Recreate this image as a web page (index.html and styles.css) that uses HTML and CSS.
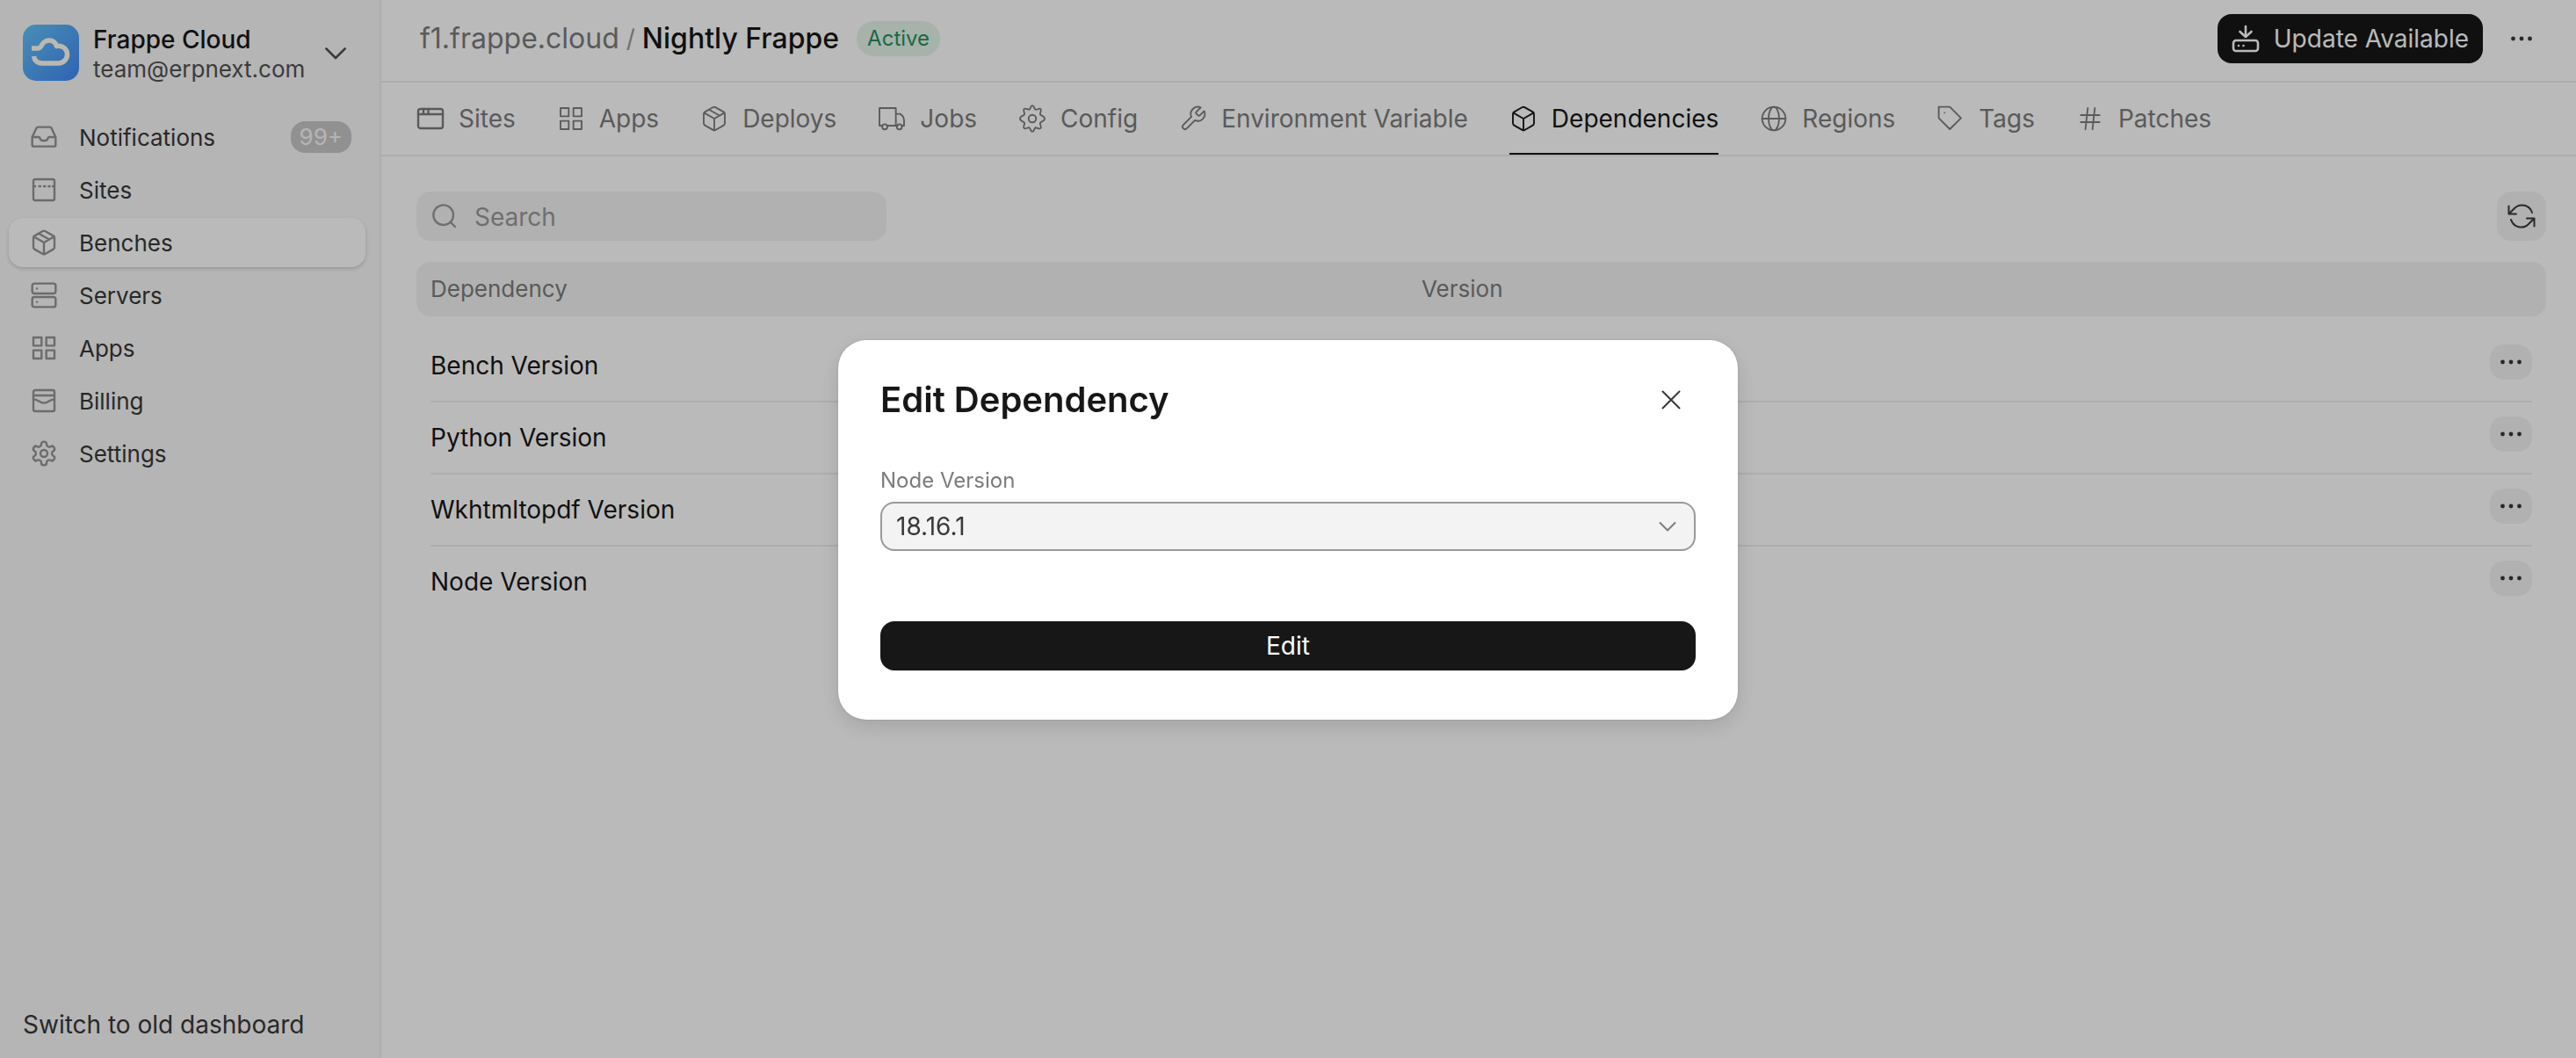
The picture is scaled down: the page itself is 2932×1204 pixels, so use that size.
FILE: index.html
```html
<!DOCTYPE html>
<html lang="en">
<head>
<meta charset="utf-8">
<meta name="viewport" content="width=device-width, initial-scale=1">
<title>Nightly Frappe - Frappe Cloud</title>
<link rel="stylesheet" href="styles.css">
</head>
<body>
<svg class="sprite" aria-hidden="true">
  <symbol id="i-package" viewBox="0 0 24 24"><path d="m7.5 4.3 9 5.1M21 8a2 2 0 0 0-1-1.7l-7-4a2 2 0 0 0-2 0l-7 4A2 2 0 0 0 3 8v8a2 2 0 0 0 1 1.7l7 4a2 2 0 0 0 2 0l7-4a2 2 0 0 0 1-1.700zM3.300 7 12 12l8.700-5M12 22V12"/></symbol>
  <symbol id="i-grid" viewBox="0 0 24 24"><path d="M3 3h7v7H3zM14 3h7v7h-7zM14 14h7v7h-7zM3 14h7v7H3z"/></symbol>
  <symbol id="i-dots" viewBox="0 0 32 32"><g fill="currentColor" stroke="none"><circle cx="6.500" cy="16" r="2.400"/><circle cx="16" cy="16" r="2.400"/><circle cx="25.500" cy="16" r="2.400"/></g></symbol>
</svg>

<div class="app">
  <aside class="sidebar">
    <button class="team" type="button">
      <svg class="logo" viewBox="0 0 64 64" aria-hidden="true">
        <defs><linearGradient id="sky" x1="0" y1="0" x2="1" y2="1"><stop offset="0" stop-color="#65c3f8"/><stop offset="1" stop-color="#3f8af6"/></linearGradient></defs>
        <rect width="64" height="64" rx="15" fill="url(#sky)"/>
        <path d="M10 27h7c3 0 3.500-2 5-4.500C24 19.500 26.500 18 30 18c4 0 7 2.200 8.500 6.500C45 23 50.500 28 50.500 34c0 5.500-4.500 10-10 10H22c-5.500 0-9-3.500-9.300-8" fill="none" stroke="#fffdf2" stroke-width="5.500" stroke-linejoin="round"/>
      </svg>
      <span class="team-text"><span class="team-name">Frappe Cloud</span><span class="team-mail">team@erpnext.com</span></span>
      <svg class="icon" viewBox="0 0 24 24" aria-hidden="true"><path d="m4 8.500 8 8 8-8"/></svg>
    </button>
    <nav class="nav">
      <a href="#" class="nav-item"><svg class="icon" viewBox="0 0 24 24"><path d="M22 12h-5.500q-.8 0-1.200 1.200Q14.700 15 13 15h-2q-1.700 0-2.300-1.800Q8.300 12 7.500 12H2M5.500 4.500 2 12v6.500a1.500 1.500 0 0 0 1.500 1.500h17a1.500 1.500 0 0 0 1.500-1.500V12l-3.500-7.500A1.500 1.500 0 0 0 17 3.500H7a1.500 1.500 0 0 0-1.500 1z"/></svg><span class="nav-label">Notifications</span><span class="count">99+</span></a>
      <a href="#" class="nav-item"><svg class="icon" viewBox="0 0 24 24"><rect x="3" y="3" width="18" height="18" rx="1.500"/><path d="M3 9h1.500M8 9h1M12 9h1M16 9h1M19.500 9H21"/></svg><span class="nav-label">Sites</span></a>
      <a href="#" class="nav-item active"><svg class="icon"><use href="#i-package"/></svg><span class="nav-label">Benches</span></a>
      <a href="#" class="nav-item"><svg class="icon" viewBox="0 0 24 24"><rect x="2" y="2" width="20" height="8.500" rx="1.800"/><rect x="2" y="13.500" width="20" height="8.500" rx="1.800"/><path d="M6 6.300h.01M6 17.700h.01"/></svg><span class="nav-label">Servers</span></a>
      <a href="#" class="nav-item"><svg class="icon"><use href="#i-grid"/></svg><span class="nav-label">Apps</span></a>
      <a href="#" class="nav-item"><svg class="icon" viewBox="0 0 24 24"><rect x="3" y="3" width="18" height="18" rx="1.500"/><path d="M3 7.500h18M3 11c4-.5 5 3 9 3s5-3.500 9-3"/></svg><span class="nav-label">Billing</span></a>
      <a href="#" class="nav-item"><svg class="icon" viewBox="0 0 24 24"><path d="M12.220 2h-.44a2 2 0 0 0-2 2v.18a2 2 0 0 1-1 1.730l-.43.25a2 2 0 0 1-2 0l-.15-.08a2 2 0 0 0-2.730.73l-.22.38a2 2 0 0 0 .73 2.730l.15.1a2 2 0 0 1 1 1.720v.51a2 2 0 0 1-1 1.740l-.15.09a2 2 0 0 0-.73 2.730l.22.38a2 2 0 0 0 2.730.73l.15-.08a2 2 0 0 1 2 0l.43.25a2 2 0 0 1 1 1.730V20a2 2 0 0 0 2 2h.44a2 2 0 0 0 2-2v-.18a2 2 0 0 1 1-1.730l.43-.25a2 2 0 0 1 2 0l.15.08a2 2 0 0 0 2.730-.73l.22-.39a2 2 0 0 0-.73-2.730l-.15-.08a2 2 0 0 1-1-1.740v-.5a2 2 0 0 1 1-1.740l.15-.09a2 2 0 0 0 .73-2.730l-.22-.38a2 2 0 0 0-2.730-.73l-.15.08a2 2 0 0 1-2 0l-.43-.25a2 2 0 0 1-1-1.730V4a2 2 0 0 0-2-2z"/><circle cx="12" cy="12" r="3"/></svg><span class="nav-label">Settings</span></a>
    </nav>
    <a href="#" class="old-link">Switch to old dashboard</a>
  </aside>

  <main class="main">
    <header class="topbar">
      <div class="crumbs"><a href="#" class="crumb">f1.frappe.cloud</a><span class="slash">/</span><h1 class="crumb-current">Nightly Frappe</h1><span class="status">Active</span></div>
      <div class="actions">
        <button class="btn-solid" type="button"><svg class="icon bold" viewBox="0 0 32 32"><path d="M16 2v12M9.500 8l6.500 6 6.500-6"/><rect x="2" y="18" width="28" height="12" rx="3"/><path d="M8 24h.01M13.500 24h.01"/></svg>Update Available</button>
        <button class="btn-icon" type="button" aria-label="More"><svg class="icon"><use href="#i-dots"/></svg></button>
      </div>
    </header>

    <nav class="tabs">
      <a href="#" class="tab"><svg class="icon bold" viewBox="0 0 32 32"><rect x="2" y="5" width="28" height="22" rx="2.500"/><path d="M2 11h28M8 5v6M13.500 5v6"/></svg>Sites</a>
      <a href="#" class="tab"><svg class="icon"><use href="#i-grid"/></svg>Apps</a>
      <a href="#" class="tab"><svg class="icon"><use href="#i-package"/></svg>Deploys</a>
      <a href="#" class="tab"><svg class="icon" viewBox="0 0 24 24"><path d="M4 18H1.500V3h14v15H8M15.500 8H19q3.500 2 3.500 5.500V18H21M15.500 18H17"/><circle cx="6" cy="19" r="2.200"/><circle cx="18.500" cy="19" r="2.200"/></svg>Jobs</a>
      <a href="#" class="tab"><svg class="icon" viewBox="0 0 24 24"><path d="M12 .8c1.700 0 1.500 3 2.600 3.500s3.300-1.700 4.500-.5-.9 3.300-.4 4.500 3.800 1.400 3.800 3.700-3.300 2.500-3.800 3.700 1.600 3.300.4 4.500-3.400-.9-4.500-.5-.9 3.500-2.600 3.500-1.500-3-2.600-3.500-3.300 1.700-4.500.5.9-3.300.4-4.500S1.500 14.300 1.500 12s3.300-2.500 3.800-3.700-1.600-3.300-.4-4.500 3.400.9 4.500.5S10.300.8 12 .8z"/><circle cx="12" cy="12" r="3.200"/></svg>Config</a>
      <a href="#" class="tab"><svg class="icon" viewBox="0 0 24 24"><path d="M14.700 6.300a1 1 0 0 0 0 1.400l1.600 1.600a1 1 0 0 0 1.400 0l3.770-3.770a6 6 0 0 1-7.940 7.940l-6.910 6.910a2.120 2.120 0 0 1-3-3l6.910-6.910a6 6 0 0 1 7.940-7.940z"/></svg>Environment Variable</a>
      <a href="#" class="tab selected" aria-current="page"><svg class="icon" viewBox="0 0 24 24"><path d="M21 8a2 2 0 0 0-1-1.700l-7-4a2 2 0 0 0-2 0l-7 4A2 2 0 0 0 3 8v8a2 2 0 0 0 1 1.700l7 4a2 2 0 0 0 2 0l7-4a2 2 0 0 0 1-1.700zM3.300 7 12 12l8.700-5M12 22V12"/></svg>Dependencies</a>
      <a href="#" class="tab"><svg class="icon" viewBox="0 0 24 24"><circle cx="12" cy="12" r="10"/><ellipse cx="12" cy="12" rx="4.500" ry="10"/><path d="M2 12h20"/></svg>Regions</a>
      <a href="#" class="tab"><svg class="icon" viewBox="0 0 24 24"><path d="M2 2h9.500l9.500 9.500-9.500 9.500L2 11.500zM7 7h.01"/></svg>Tags</a>
      <a href="#" class="tab"><svg class="icon" viewBox="0 0 24 24"><path d="M4 9h16M4 15h16M10 3 8 21M16 3l-2 18"/></svg>Patches</a>
    </nav>

    <section class="content">
      <div class="tools">
        <label class="search"><svg class="icon" viewBox="0 0 24 24"><circle cx="11" cy="11" r="8.500"/><path d="m21 21-4-4"/></svg><input type="text" placeholder="Search" aria-label="Search"></label>
        <button class="btn-refresh" type="button" aria-label="Refresh"><svg class="icon thin" viewBox="0 0 32 32"><path d="M1.500 4.500v9H10M30.500 27.500v-9H22M1.500 13.500 8 7a12 12 0 0 1 20 5M30.500 18.500 24 25a12 12 0 0 1-20-5"/></svg></button>
      </div>
      <table class="deps">
        <thead><tr><th class="edge"></th><th class="name">Dependency</th><th>Version</th><th class="act"></th><th class="edge"></th></tr></thead>
        <tbody>
          <tr class="gap"><td colspan="5"></td></tr>
          <tr><td class="edge"></td><td>Bench Version</td><td></td><td class="act"><button class="btn-row" type="button" aria-label="Options"><svg class="icon"><use href="#i-dots"/></svg></button></td><td class="edge"></td></tr>
          <tr><td class="edge"></td><td>Python Version</td><td></td><td class="act"><button class="btn-row" type="button" aria-label="Options"><svg class="icon"><use href="#i-dots"/></svg></button></td><td class="edge"></td></tr>
          <tr><td class="edge"></td><td>Wkhtmltopdf Version</td><td></td><td class="act"><button class="btn-row" type="button" aria-label="Options"><svg class="icon"><use href="#i-dots"/></svg></button></td><td class="edge"></td></tr>
          <tr><td class="edge"></td><td>Node Version</td><td></td><td class="act"><button class="btn-row" type="button" aria-label="Options"><svg class="icon"><use href="#i-dots"/></svg></button></td><td class="edge"></td></tr>
        </tbody>
      </table>
    </section>
  </main>
</div>

<div class="overlay">
  <div class="dialog" role="dialog" aria-modal="true" aria-labelledby="dialog-title">
    <div class="dialog-head">
      <h2 id="dialog-title">Edit Dependency</h2>
      <button class="btn-icon" type="button" aria-label="Close"><svg class="icon thin" viewBox="0 0 32 32"><path d="m6.500 6.500 19 19M25.500 6.500l-19 19"/></svg></button>
    </div>
    <label class="field-label" for="node-version">Node Version</label>
    <div class="select">
      <select id="node-version"><option>18.16.1</option></select>
      <svg class="icon thin" viewBox="0 0 32 32" aria-hidden="true"><path d="m7.500 12 8.500 8.500 8.500-8.500"/></svg>
    </div>
    <button class="btn-submit" type="button">Edit</button>
  </div>
</div>
</body>
</html>
```
FILE: styles.css
```css
*, *::before, *::after { box-sizing: border-box; }

body {
  margin: 0;
  font-family: Inter, "Liberation Sans", sans-serif;
  font-optical-sizing: none;
  font-size: 28px;
  line-height: 32px;
  color: #171717;
  background: #fff;
}

button, input, select {
  margin: 0;
  padding: 0;
  border: 0;
  font: inherit;
  color: inherit;
  background: none;
}

a { color: inherit; text-decoration: none; }
h1, h2 { margin: 0; font: inherit; }

.sprite { display: none; }

.icon {
  flex: none;
  width: 32px;
  height: 32px;
  fill: none;
  stroke: currentColor;
  stroke-width: 1.5;
  stroke-linecap: round;
  stroke-linejoin: round;
}
.icon.thin { stroke-width: 2; }
.icon.bold { stroke-width: 2.6; }

.app { display: flex; min-height: 100vh; }

/* Sidebar */
.sidebar {
  display: flex;
  flex-direction: column;
  flex: none;
  width: 434px;
  padding: 24px 16px 22px 10px;
  border-right: 2px solid #ededed;
  background: #f8f8f8;
}
.team {
  display: flex;
  align-items: center;
  gap: 16px;
  padding: 2px 18px 2px 16px;
  text-align: left;
}
.team .icon { color: #525252; stroke-width: 2; }
.logo { flex: none; width: 64px; height: 64px; }
.team-text {
  flex: 1;
  min-width: 0;
  display: flex;
  flex-direction: column;
  gap: 4px;
  padding-top: 4px;
  line-height: 30px;
}
.team-name { font-weight: 500; }
.team-mail { font-size: 26px; color: #525252; }

.nav { display: flex; flex-direction: column; gap: 4px; margin-top: 32px; }
.nav-item {
  display: flex;
  align-items: center;
  gap: 24px;
  height: 56px;
  padding: 0 16px 0 24px;
  border-radius: 16px;
  font-size: 26px;
  color: #383838;
}
.nav-item .icon { color: #949494; stroke-width: 1.8; }
.nav-item.active { background: #fff; box-shadow: 0 2px 4px rgba(0, 0, 0, .16); }
.nav-label { flex: 1; padding-top: 2px; }
.count {
  padding: 2px 10px;
  border-radius: 16px;
  background: #c7c7c7;
  color: #f8f8f8;
}
.old-link { margin-top: auto; padding-left: 16px; color: #383838; }

/* Page header */
.main { flex: 1; min-width: 0; }
.topbar {
  display: flex;
  align-items: center;
  justify-content: space-between;
  height: 94px;
  padding: 0 34px 4px 44px;
  border-bottom: 2px solid #ededed;
}
.crumbs, .actions { display: flex; align-items: center; }
.crumbs { font-size: 32px; }
.crumb { color: #7c7c7c; }
.slash { margin: 0 8px; font-size: 28px; color: #999; }
.crumb-current { font-weight: 500; }
.status {
  margin-left: 20px;
  padding: 4px 12px;
  border-radius: 20px;
  font-size: 24px;
  color: #278f5e;
  background: #e4f5e9;
}
.actions { gap: 16px; }
.btn-solid {
  display: flex;
  align-items: center;
  gap: 16px;
  height: 56px;
  padding: 0 16px;
  border-radius: 16px;
  background: #171717;
  color: #fff;
}
.btn-icon, .btn-refresh {
  display: flex;
  align-items: center;
  justify-content: center;
  width: 56px;
  height: 56px;
  border-radius: 16px;
  color: #383838;
}

.tabs {
  display: flex;
  gap: 47px;
  height: 84px;
  padding: 0 40px;
  border-bottom: 2px solid #ededed;
}
.tab {
  display: flex;
  align-items: center;
  gap: 16px;
  padding-top: 2px;
  border-bottom: 2px solid transparent;
  color: #7c7c7c;
}
.tab .icon { stroke-width: 1.4; }
.tab .icon.bold { stroke-width: 2.4; }
.tab.selected { border-color: #171717; color: #171717; }

/* List */
.content { padding: 40px 34px 0 40px; }
.tools { display: flex; justify-content: space-between; }
.search {
  display: flex;
  align-items: center;
  gap: 18px;
  width: 535px;
  height: 56px;
  padding: 0 16px;
  border-radius: 16px;
  background: #f3f3f3;
  color: #999;
}
.search .icon { stroke-width: 1.8; }
.search input { flex: 1; min-width: 0; padding-top: 2px; outline: 0; }
.search input::placeholder { color: #999; opacity: 1; }
.btn-refresh { background: #f3f3f3; }

.deps {
  width: 100%;
  margin-top: 24px;
  border-collapse: separate;
  border-spacing: 0;
  table-layout: fixed;
}
.deps th {
  height: 62px;
  padding: 0;
  background: #f3f3f3;
  color: #7c7c7c;
  font-size: 26px;
  font-weight: 400;
  text-align: left;
}
.deps th:first-child { border-radius: 16px 0 0 16px; }
.deps th:last-child { border-radius: 0 16px 16px 0; }
.deps td { height: 82px; padding: 0; border-bottom: 2px solid #ededed; }
.deps tr:last-child td, .deps td.edge { border-bottom-color: transparent; }
.deps .gap td { height: 16px; border: 0; }
.deps .edge { width: 16px; }
.deps .name { width: 1128px; }
.deps .act { width: 48px; vertical-align: top; padding-top: 16px; }
.btn-row {
  display: flex;
  align-items: center;
  justify-content: center;
  width: 48px;
  height: 40px;
  border-radius: 16px;
  background: #f3f3f3;
  color: #383838;
}

/* Dialog */
.overlay {
  position: fixed;
  inset: 0;
  display: flex;
  align-items: center;
  justify-content: center;
  padding-top: 2px;
  background: rgba(0, 0, 0, .27);
}
.dialog {
  display: flex;
  flex-direction: column;
  width: 1024px;
  max-width: 100%;
  padding: 40px 48px 56px;
  border-radius: 32px;
  background: #fff;
  box-shadow: 0 0 2px rgba(0, 0, 0, .2), 0 8px 24px rgba(0, 0, 0, .12);
}
.dialog-head { display: flex; align-items: center; justify-content: space-between; }
.dialog-head h2 { font-size: 40px; font-weight: 600; line-height: 56px; }
.field-label { margin-top: 48px; font-size: 24px; color: #7c7c7c; }
.select { display: grid; align-items: center; margin-top: 8px; }
.select select {
  grid-area: 1 / 1;
  height: 56px;
  padding: 0 64px 0 16px;
  border: 2px solid #999;
  border-radius: 16px;
  appearance: none;
  background: #f3f3f3;
  color: #383838;
}
.select .icon {
  grid-area: 1 / 1;
  justify-self: end;
  margin-right: 16px;
  color: #7c7c7c;
  pointer-events: none;
}
.btn-submit {
  height: 56px;
  margin-top: 80px;
  border-radius: 16px;
  background: #171717;
  color: #fff;
}
```
